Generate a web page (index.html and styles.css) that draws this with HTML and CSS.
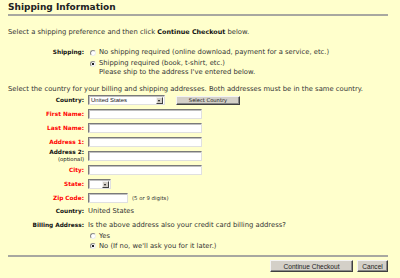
FILE: index.html
```html
<!DOCTYPE html>
<html lang="en">

<head>
    <meta charset="UTF-8">
    <title>Shipping Information</title>
    <link rel="stylesheet" href="styles.css">
</head>

<body>
    <h1 class="title">Shipping Information</h1>

    <p class="intro">Select a shipping preference and then click <b>Continue Checkout</b> below.</p>

    <!-- shipping choice -->
    <div class="row choice-row">
        <label class="label">Shipping:</label>
        <div class="options">
            <div class="option">
                <input type="radio" class="radio" name="ship">
                <span>No shipping required (online download, payment for a service, etc.)</span>
            </div>
            <div class="option">
                <input type="radio" class="radio" name="ship" checked>
                <span>Shipping required (book, t-shirt, etc.)<br>Please ship to the address I've entered below.</span>
            </div>
        </div>
    </div>

    <p class="country-note">Select the country for your billing and shipping addresses. Both addresses must be in the same country.</p>

    <!-- address fields -->
    <div class="fields">
        <div class="row field">
            <label class="label">Country:</label>
            <div class="control">
                <div class="select country-select">
                    <span class="select-text">United States</span>
                    <span class="select-arrow"></span>
                </div>
                <button class="btn small-btn">Select Country</button>
            </div>
        </div>
        <div class="row field">
            <label class="label required">First Name:</label>
            <div class="control"><input type="text" class="text-input"></div>
        </div>
        <div class="row field">
            <label class="label required">Last Name:</label>
            <div class="control"><input type="text" class="text-input"></div>
        </div>
        <div class="row field">
            <label class="label required">Address 1:</label>
            <div class="control"><input type="text" class="text-input"></div>
        </div>
        <div class="row field">
            <label class="label two-line">Address 2:<br><span class="optional">(optional)</span></label>
            <div class="control"><input type="text" class="text-input"></div>
        </div>
        <div class="row field">
            <label class="label required">City:</label>
            <div class="control"><input type="text" class="text-input"></div>
        </div>
        <div class="row field">
            <label class="label required">State:</label>
            <div class="control">
                <div class="select state-select">
                    <span class="select-text"></span>
                    <span class="select-arrow"></span>
                </div>
            </div>
        </div>
        <div class="row field">
            <label class="label required">Zip Code:</label>
            <div class="control">
                <input type="text" class="text-input zip-input">
                <span class="hint">(5 or 9 digits)</span>
            </div>
        </div>
        <div class="row plain-row">
            <label class="label">Country:</label>
            <div class="control">United States</div>
        </div>
        <div class="row billing-row">
            <label class="label">Billing Address:</label>
            <div class="control">Is the above address also your credit card billing address?</div>
        </div>
        <div class="row radio-row">
            <span></span>
            <div class="option">
                <input type="radio" class="radio" name="billing">
                <span>Yes</span>
            </div>
        </div>
        <div class="row radio-row">
            <span></span>
            <div class="option">
                <input type="radio" class="radio" name="billing" checked>
                <span>No (If no, we'll ask you for it later.)</span>
            </div>
        </div>
    </div>

    <div class="actions">
        <button class="btn action-btn checkout-btn">Continue Checkout</button>
        <button class="btn action-btn cancel-btn">Cancel</button>
    </div>
</body>

</html>
```

FILE: styles.css
```css
body {
    margin: 0;
    padding: 0 12px 0 8px;
    background-color: #ffffcc;
    font-family: "DejaVu Sans", Verdana, sans-serif;
    font-size: 6.8px;
    color: #333;
}

.title {
    margin: 0;
    padding: 2px 0 1px;
    font-size: 9px;
    line-height: 11px;
    color: #222;
    border-bottom: 2px solid #a8a8a0;
}

.intro {
    margin: 12px 0 0;
    line-height: 8px;
}

.intro b {
    font-size: 6.4px;
    color: #111;
}

/* label / control rows */
.row {
    display: grid;
    grid-template-columns: 76px 1fr;
    column-gap: 4px;
    align-items: center;
}

.label {
    text-align: right;
    font-weight: bold;
    font-size: 5.8px;
    color: #111;
}

.required {
    color: #f00;
}

.choice-row {
    margin-top: 12px;
    align-items: start;
}

.choice-row .label {
    line-height: 9px;
}

.options {
    display: flex;
    flex-direction: column;
    gap: 2px;
}

.option {
    display: flex;
    align-items: flex-start;
    gap: 3px;
    line-height: 9px;
}

.radio-row .option {
    line-height: 10px;
}

.radio {
    appearance: none;
    width: 6px;
    height: 6px;
    margin: 1.5px 0 0 2px;
    border-radius: 50%;
    border: 1px solid;
    border-color: #8a8a8a #eee #eee #8a8a8a;
    background: #fff;
    flex: none;
}

.radio-row .radio {
    margin-top: 2px;
}

.radio:checked {
    background: radial-gradient(circle, #222 0 1.1px, #fff 1.6px);
}

.country-note {
    margin: 8px 0 0;
    line-height: 8px;
}

.field {
    height: 14px;
}

.control {
    display: flex;
    align-items: center;
}

.text-input {
    box-sizing: border-box;
    width: 114px;
    height: 10px;
    margin: 0;
    padding: 0;
    background: #fff;
    border: 1px solid;
    border-color: #7a7a7a #e0e0e0 #e0e0e0 #7a7a7a;
    box-shadow: inset 1px 1px 0 #c0c0c0;
}

.zip-input {
    width: 40px;
}

.hint {
    margin-left: 4px;
    font-size: 5.4px;
}

.optional {
    font-weight: normal;
    font-size: 5.4px;
}

.two-line {
    line-height: 7px;
}

/* fake drop-down */
.select {
    box-sizing: border-box;
    display: flex;
    align-items: center;
    height: 10px;
    background: #fff;
    border: 1px solid;
    border-color: #7a7a7a #e0e0e0 #e0e0e0 #7a7a7a;
    box-shadow: inset 1px 1px 0 #c0c0c0;
}

.country-select {
    width: 77px;
}

.state-select {
    width: 23px;
}

.select-text {
    flex: 1;
    padding-left: 2px;
    font-family: "Liberation Sans", Arial, sans-serif;
    font-size: 6px;
    color: #222;
}

.select-arrow {
    box-sizing: border-box;
    width: 7px;
    height: 7px;
    margin-right: 1px;
    background: #d4d0c8;
    border: 1px solid;
    border-color: #f4f4f4 #404040 #404040 #f4f4f4;
    position: relative;
}

.select-arrow::after {
    content: "";
    position: absolute;
    left: 1px;
    top: 2px;
    border-left: 1.5px solid transparent;
    border-right: 1.5px solid transparent;
    border-top: 2px solid #111;
}

.btn {
    box-sizing: border-box;
    margin: 0;
    padding: 0;
    background: #d4d0c8;
    border: 1px solid;
    border-color: #f4f4f4 #404040 #404040 #f4f4f4;
    box-shadow: inset -1px -1px 0 #888;
    font-family: "Liberation Sans", Arial, sans-serif;
    color: #222;
}

.small-btn {
    width: 64px;
    height: 9px;
    margin-left: 11px;
    font-family: "DejaVu Sans", Verdana, sans-serif;
    font-size: 5.2px;
    line-height: 7px;
}

.plain-row {
    height: 12px;
}

.billing-row {
    height: 12px;
    margin-top: 2px;
}

.actions {
    display: flex;
    justify-content: flex-end;
    gap: 4px;
    margin-top: 4px;
    padding-top: 3px;
    border-top: 2px solid #a8a8a0;
}

.action-btn {
    height: 12px;
    font-size: 6.6px;
}

.checkout-btn {
    width: 83px;
}

.cancel-btn {
    width: 31px;
}
```
